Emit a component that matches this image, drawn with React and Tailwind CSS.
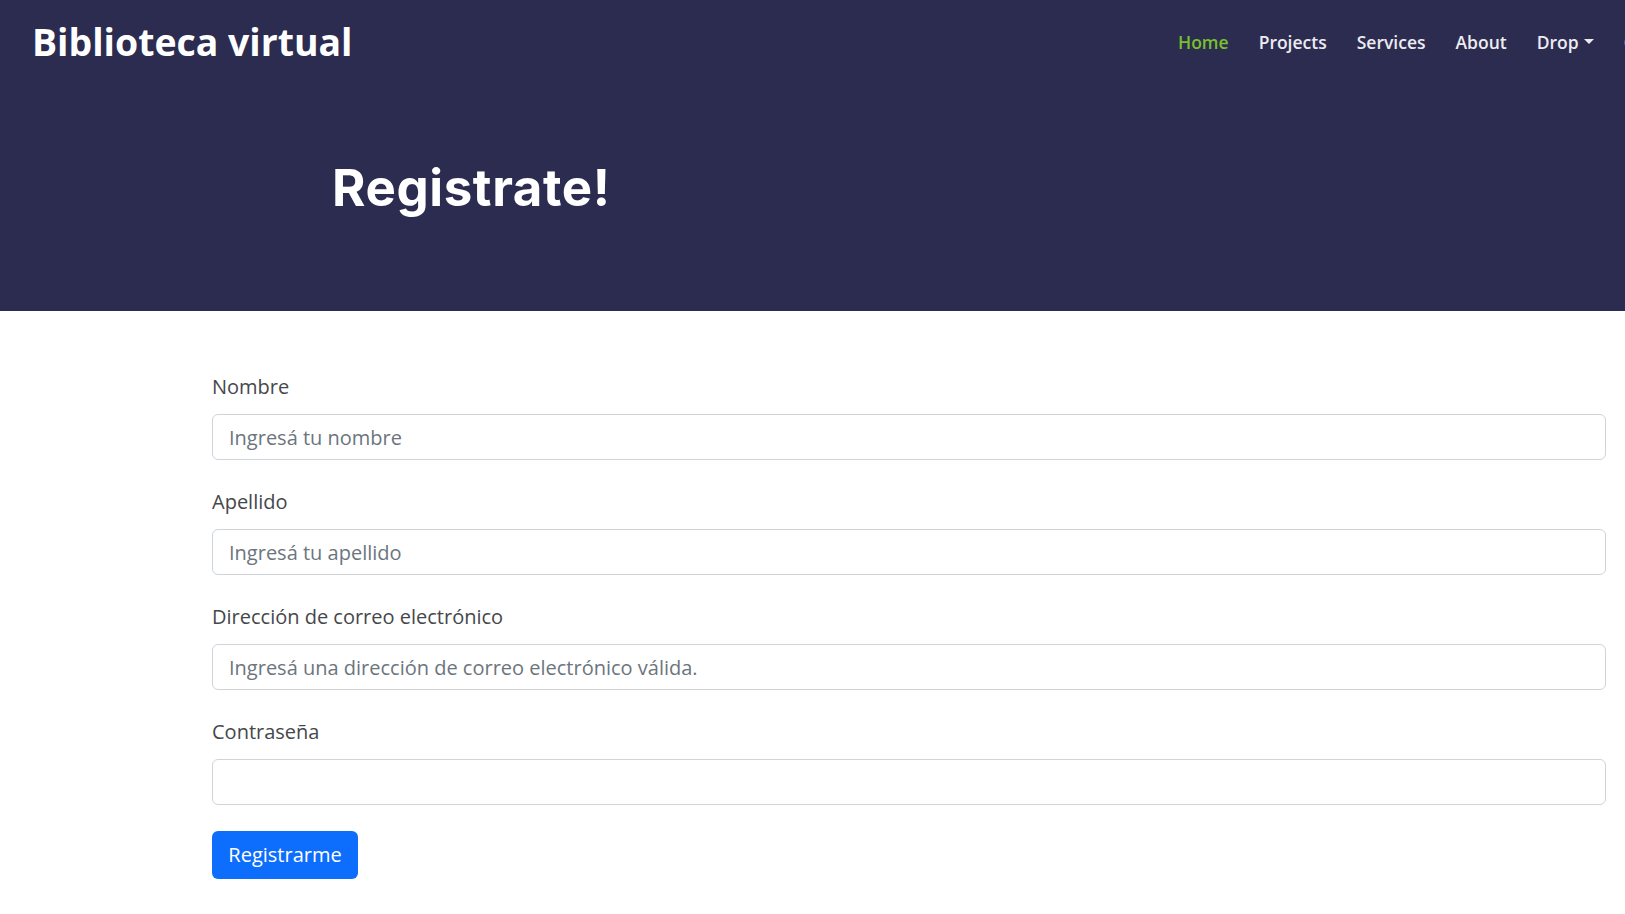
import React, { useState } from 'react';

const links = ['Home', 'Projects', 'Services', 'About'];

const fields = [
  { id: 'nombre', label: 'Nombre', type: 'text', placeholder: 'Ingresá tu nombre' },
  { id: 'apellido', label: 'Apellido', type: 'text', placeholder: 'Ingresá tu apellido' },
  {
    id: 'email',
    label: 'Dirección de correo electrónico',
    type: 'email',
    placeholder: 'Ingresá una dirección de correo electrónico válida.',
  },
  { id: 'password', label: 'Contraseña', type: 'password', placeholder: '' },
];

function App() {
  const [values, setValues] = useState({ nombre: '', apellido: '', email: '', password: '' });

  return (
    <div className="min-h-screen w-full overflow-hidden bg-white font-['Open_Sans',sans-serif]">
      <header className="h-[311px] bg-[#2c2b50]">
        <nav className="flex h-[84px] items-center whitespace-nowrap">
          <div className="w-[1178px] shrink-0 pl-[32px]">
            <a href="#" className="text-[37.4px] font-bold leading-none text-white">
              Biblioteca virtual
            </a>
          </div>
          <ul className="flex shrink-0 items-center gap-[30px] text-[17.5px] font-semibold">
            {links.map((l, i) => (
              <li key={l}>
                <a href="#" className={i === 0 ? 'text-[#78c02c]' : 'text-[#ececf0]'}>
                  {l}
                </a>
              </li>
            ))}
            <li>
              <a href="#" className="flex items-center gap-[5px] text-[#ececf0]">
                Drop
                <span className="mt-[-2px] h-0 w-0 border-x-[5px] border-t-[5px] border-x-transparent border-t-[#ececf0]" />
              </a>
            </li>
            <li>
              <a href="#" className="text-[#ececf0]">Contact</a>
            </li>
          </ul>
        </nav>
        <h1 className="mt-[74px] pl-[332px] font-['Inter',sans-serif] text-[51px] font-bold leading-[60px] tracking-[0.6px] text-white">
          Registrate!
        </h1>
      </header>

      <form className="ml-[212px] mr-[19px] pt-[63px]" onSubmit={(e) => e.preventDefault()}>
        {fields.map((f) => (
          <div key={f.id} className="mb-[29px]">
            <label htmlFor={f.id} className="mb-[14px] block text-[20px] leading-[26px] text-[#45484b]">
              {f.label}
            </label>
            <input
              id={f.id}
              type={f.type}
              placeholder={f.placeholder}
              value={values[f.id]}
              onChange={(e) => setValues({ ...values, [f.id]: e.target.value })}
              className="block h-[46px] w-full rounded-[6px] border border-[#ced4da] px-4 text-[20px] text-[#212529] placeholder:text-[#6c757d] focus:outline-none"
            />
          </div>
        ))}
        <button
          type="submit"
          className="mt-[-3px] h-[48px] w-[146px] rounded-[6px] bg-[#0d6efd] text-[20px] text-white"
        >
          Registrarme
        </button>
      </form>
    </div>
  );
}

export default App;
